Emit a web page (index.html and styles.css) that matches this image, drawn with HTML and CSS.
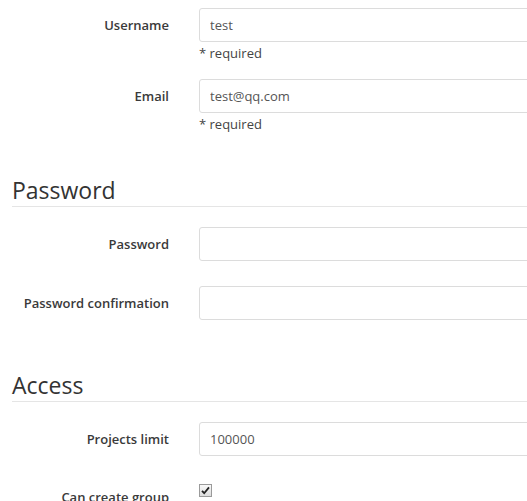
FILE: index.html
```html
<!DOCTYPE html>
<html lang="en">
<head>
<meta charset="UTF-8">
<meta name="viewport" content="width=device-width, initial-scale=1.0">
<title>Edit user</title>
<link rel="stylesheet" href="styles.css">
</head>
<body>

<div class="container">
  <form class="user-form">
    <div class="section">
      <div class="form-group has-help">
        <label class="control-label" for="username">Username</label>
        <div class="field">
          <input type="text" id="username" class="form-control" value="test">
          <span class="help">* required</span>
        </div>
      </div>
      <div class="form-group has-help">
        <label class="control-label" for="email">Email</label>
        <div class="field">
          <input type="text" id="email" class="form-control" value="test@qq.com">
          <span class="help">* required</span>
        </div>
      </div>
    </div>

    <div class="section">
      <h4 class="legend">Password</h4>
      <div class="form-group">
        <label class="control-label" for="password">Password</label>
        <div class="field">
          <input type="password" id="password" class="form-control">
        </div>
      </div>
      <div class="form-group">
        <label class="control-label" for="password_confirmation">Password confirmation</label>
        <div class="field">
          <input type="password" id="password_confirmation" class="form-control">
        </div>
      </div>
    </div>

    <div class="section">
      <h4 class="legend">Access</h4>
      <div class="form-group">
        <label class="control-label" for="projects_limit">Projects limit</label>
        <div class="field">
          <input type="text" id="projects_limit" class="form-control" value="100000">
        </div>
      </div>
      <div class="form-group check-group">
        <label class="control-label" for="can_create_group">Can create group</label>
        <div class="field">
          <svg class="checkbox" width="13" height="13" viewBox="0 0 13 13">
            <defs>
              <linearGradient id="box" x1="0" y1="0" x2="0" y2="1">
                <stop offset="0" stop-color="#fafafa"/>
                <stop offset="1" stop-color="#dcdcdc"/>
              </linearGradient>
            </defs>
            <rect x="0.5" y="0.5" width="12" height="12" fill="url(#box)" stroke="#9a9a9a"/>
            <path d="M3 6.8 L5.2 9.2 L10 3.4" fill="none" stroke="#222" stroke-width="1.8"/>
          </svg>
        </div>
      </div>
    </div>
  </form>
</div>

</body>
</html>
```

FILE: styles.css
```css
html, body {
  overflow: hidden;
}
body {
  font-family: "Open Sans", "Noto Sans", Arial, sans-serif;
  font-size: 13px;
  line-height: 18px;
  color: #333;
  background-color: #fff;
  margin: 0;
  padding: 0;
}
.container {
  width: 960px;
  padding: 8px 0 0 12px;
}
.section + .section {
  padding-top: 24px;
}
.legend {
  margin: 0 0 20px;
  font-size: 23px;
  font-weight: 400;
  line-height: 32px;
  color: #333;
  border-bottom: 1px solid #e5e5e5;
}
.form-group {
  display: grid;
  grid-template-columns: 157px 1fr;
  column-gap: 30px;
  margin-bottom: 25px;
}
.form-group.has-help {
  margin-bottom: 17px;
}
.control-label {
  padding-top: 8px;
  text-align: right;
  font-weight: 600;
  color: #3a3a3a;
  white-space: nowrap;
}
.form-control {
  display: block;
  width: 100%;
  height: 34px;
  box-sizing: border-box;
  padding: 6px 10px;
  font-family: inherit;
  font-size: 13px;
  color: #555;
  background-color: #fff;
  border: 1px solid #dcdcdc;
  border-radius: 3px;
  outline: none;
}
.help {
  display: block;
  margin-top: 2px;
  color: #444;
}
.check-group .control-label {
  padding-top: 7px;
}
.checkbox {
  display: block;
  margin-top: 3px;
}
```
